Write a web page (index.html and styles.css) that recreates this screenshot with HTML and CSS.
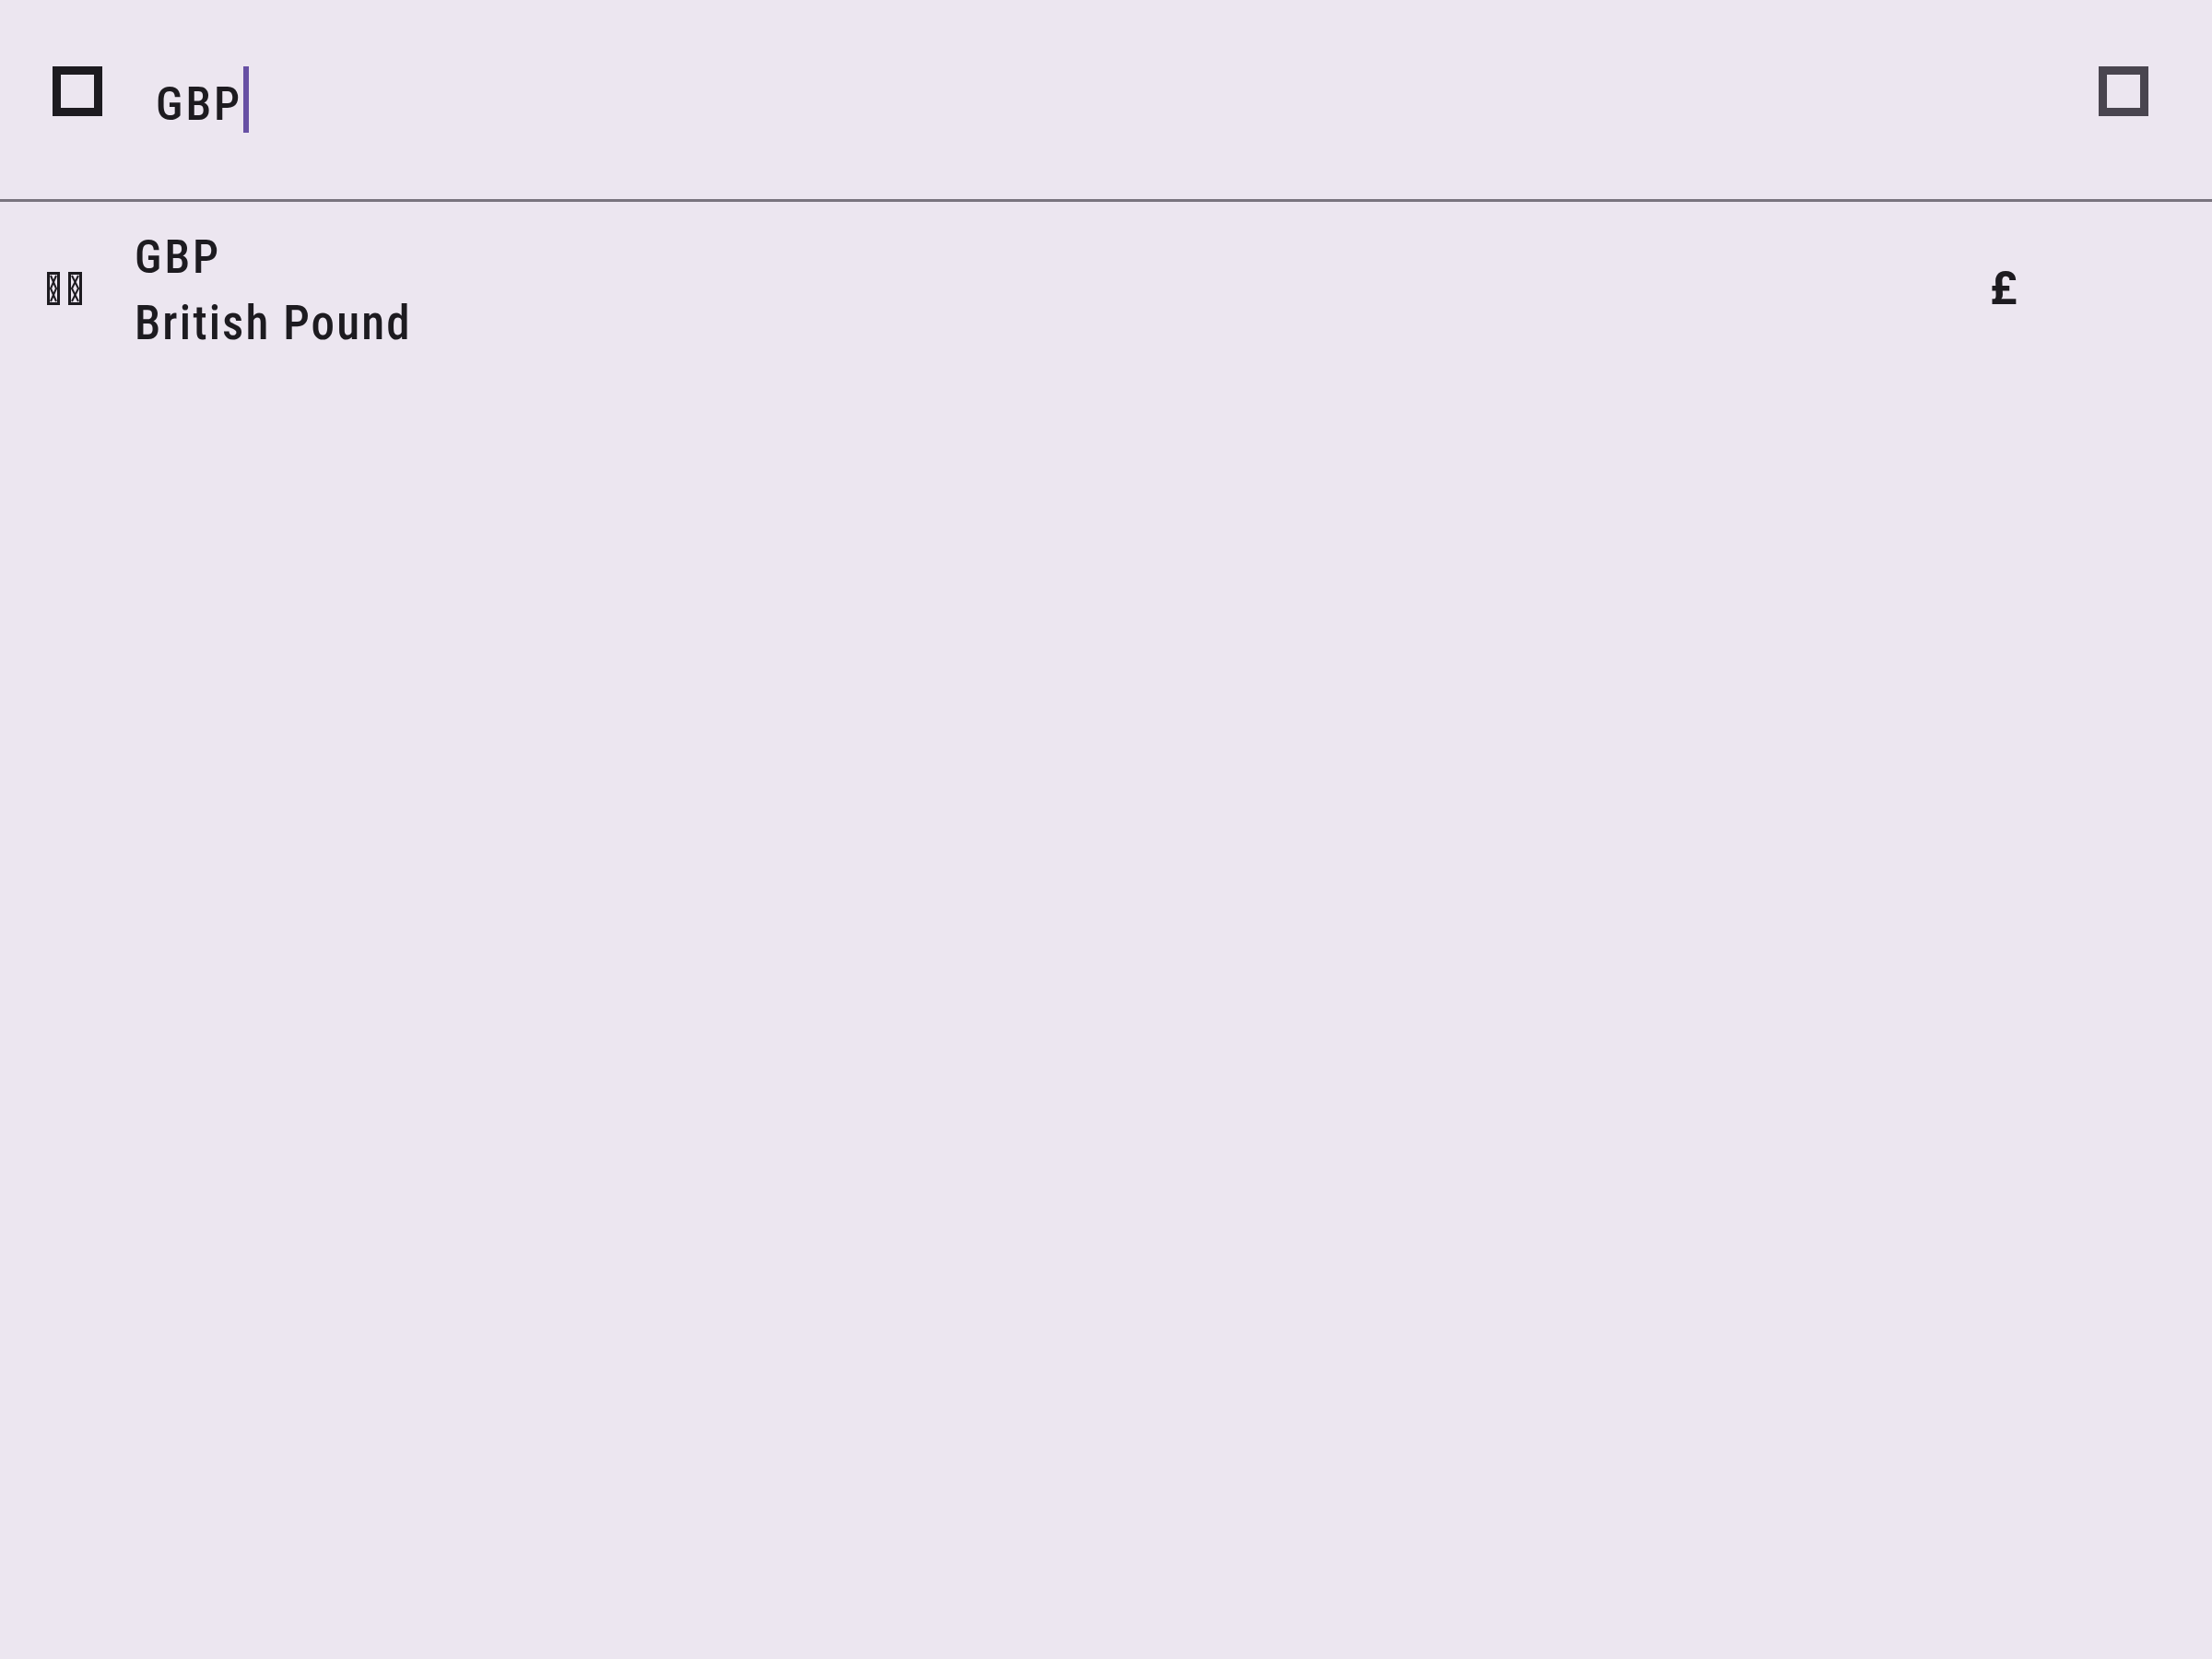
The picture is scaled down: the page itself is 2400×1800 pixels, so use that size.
FILE: index.html
```html
<!DOCTYPE html>
<html>
<head>
<meta charset="utf-8">
<link rel="stylesheet" href="styles.css">
</head>
<body>
<div class="page">
  <header class="search-bar">
    <div class="icon-box icon-back"></div>
    <div class="field">
      <span class="field-text">GBP</span>
      <span class="caret"></span>
    </div>
    <div class="icon-box icon-clear"></div>
  </header>
  <div class="divider"></div>
  <div class="list">
    <div class="tile">
      <div class="flag">
        <svg width="38" height="36" viewBox="0 0 38 36">
          <g fill="none" stroke="#1d1b20" stroke-width="3">
            <rect x="1.5" y="1.5" width="11" height="33"/>
            <rect x="24.5" y="1.5" width="12" height="33"/>
          </g>
          <g fill="none" stroke="#1d1b20" stroke-width="2">
            <path d="M4 4 L10 18 L4 32 M10 4 L4 18 L10 32"/>
            <path d="M27 4 L34 18 L27 32 M34 4 L27 18 L34 32"/>
          </g>
        </svg>
      </div>
      <div class="tile-text">
        <div class="tile-title">GBP</div>
        <div class="tile-subtitle">British Pound</div>
      </div>
      <div class="tile-trailing">£</div>
    </div>
  </div>
</div>
</body>
</html>
```
FILE: styles.css
```css
html, body {
  margin: 0;
  padding: 0;
}
body {
  background: #ece6f0;
  color: #1d1b20;
  font-family: Roboto, "Liberation Sans", sans-serif;
}
.page {
  width: 2400px;
  height: 1800px;
  background: #ece6f0;
}
.search-bar {
  display: flex;
  align-items: flex-start;
  height: 216px;
  box-sizing: border-box;
}
.icon-box {
  width: 54px;
  height: 54px;
  box-sizing: border-box;
  border: 9px solid #1d1b20;
  margin-top: 72px;
  flex: none;
}
.icon-back {
  margin-left: 57px;
}
.icon-clear {
  margin-left: auto;
  margin-right: 69px;
  border-color: #49454f;
}
.field {
  display: flex;
  align-items: flex-start;
  margin-left: 58px;
}
.field-text {
  font-size: 50px;
  font-weight: 500;
  font-stretch: 85%;
  line-height: 72px;
  letter-spacing: 3px;
  margin-top: 77px;
}
.caret {
  width: 6px;
  height: 72px;
  margin-top: 72px;
  margin-left: 1px;
  background: #6750a4;
}
.divider {
  height: 3px;
  background: #79747e;
}
.tile {
  display: flex;
  align-items: center;
  padding: 24px 0;
}
.flag {
  margin-left: 51px;
  width: 38px;
  height: 36px;
  margin-top: -4px;
  flex: none;
}
.flag svg {
  display: block;
}
.tile-text {
  margin-left: 57px;
  flex: 1;
}
.tile-title {
  font-size: 50px;
  font-weight: 500;
  font-stretch: 85%;
  line-height: 72px;
  letter-spacing: 3px;
}
.tile-subtitle {
  font-size: 51px;
  font-weight: 500;
  font-stretch: 85%;
  line-height: 72px;
  letter-spacing: 2.1px;
}
.tile-trailing {
  width: 169px;
  padding-right: 72px;
  font-size: 50px;
  font-weight: 700;
  line-height: 72px;
  margin-top: -4px;
}
```
